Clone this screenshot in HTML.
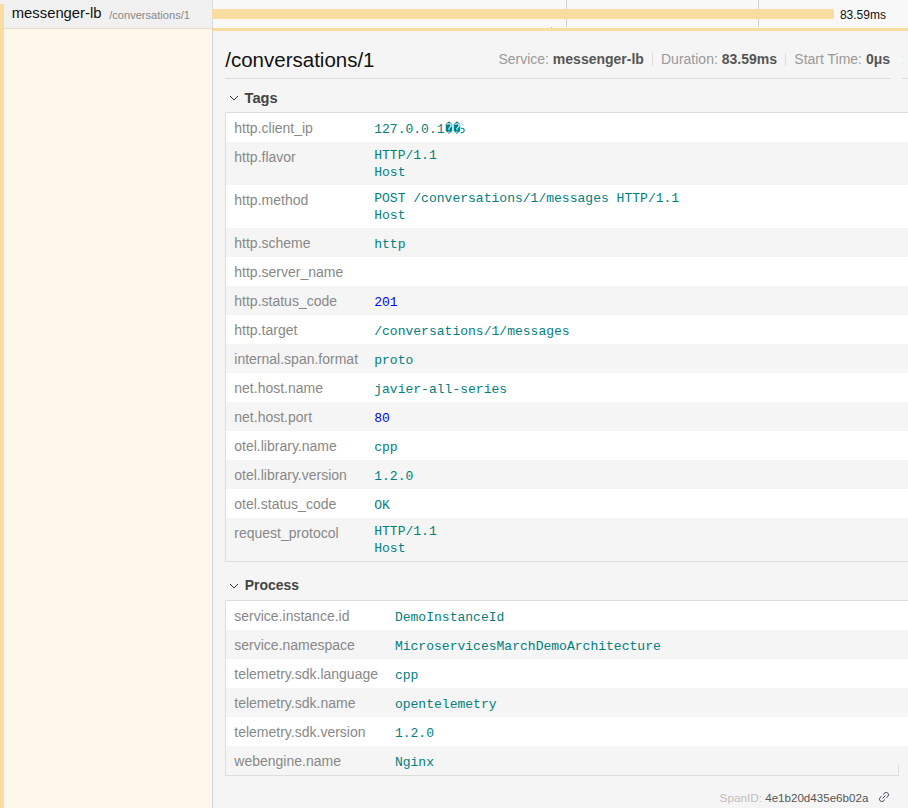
<!DOCTYPE html>
<html><head><meta charset="utf-8">
<style>
html,body{margin:0;padding:0;width:908px;height:808px;overflow:hidden;background:#f5f5f5;}
body{position:relative;font-family:"Liberation Sans",sans-serif;}
.a{position:absolute;white-space:pre;line-height:1;}
.m{font-family:"Liberation Mono",monospace;}
.b{position:absolute;}
b{font-weight:bold;}
</style></head><body>
<div class="b" style="left:0px;top:0px;width:212px;height:28px;background:#f0f0f0;"></div>
<div class="b" style="left:0px;top:4px;width:4px;height:804px;background:#f8dca1;"></div>
<div class="b" style="left:4px;top:28px;width:208px;height:1px;background:#e6dccb;"></div>
<div class="b" style="left:4px;top:29px;width:208px;height:779px;background:#fef8ec;"></div>
<div class="b" style="left:212px;top:0px;width:1px;height:28px;background:#e6e6e6;"></div>
<div class="b" style="left:212px;top:1px;width:1px;height:1px;background:#d0d0d0;"></div>
<div class="b" style="left:212px;top:3px;width:1px;height:1px;background:#d0d0d0;"></div>
<div class="b" style="left:212px;top:5px;width:1px;height:1px;background:#d0d0d0;"></div>
<div class="b" style="left:212px;top:7px;width:1px;height:1px;background:#d0d0d0;"></div>
<div class="b" style="left:212px;top:9px;width:1px;height:1px;background:#d0d0d0;"></div>
<div class="b" style="left:212px;top:11px;width:1px;height:1px;background:#d0d0d0;"></div>
<div class="b" style="left:212px;top:13px;width:1px;height:1px;background:#d0d0d0;"></div>
<div class="b" style="left:212px;top:15px;width:1px;height:1px;background:#d0d0d0;"></div>
<div class="b" style="left:212px;top:17px;width:1px;height:1px;background:#d0d0d0;"></div>
<div class="b" style="left:212px;top:19px;width:1px;height:1px;background:#d0d0d0;"></div>
<div class="b" style="left:212px;top:21px;width:1px;height:1px;background:#d0d0d0;"></div>
<div class="b" style="left:212px;top:23px;width:1px;height:1px;background:#d0d0d0;"></div>
<div class="b" style="left:212px;top:25px;width:1px;height:1px;background:#d0d0d0;"></div>
<div class="b" style="left:212px;top:27px;width:1px;height:1px;background:#d0d0d0;"></div>
<div class="b" style="left:212px;top:28px;width:1px;height:780px;background:#d3d3d3;"></div>
<div class="b" style="left:213px;top:0px;width:695px;height:28px;background:#f8f8f8;"></div>
<div class="b" style="left:566px;top:0px;width:1px;height:27px;background:#d0d0d0;"></div>
<div class="b" style="left:758px;top:0px;width:1px;height:27px;background:#d0d0d0;"></div>
<div class="b" style="left:551px;top:27px;width:1px;height:1px;background:#b8b8b8;"></div>
<div class="b" style="left:902px;top:56px;width:1px;height:1px;background:#cfe3f3;"></div>
<div class="b" style="left:902px;top:63px;width:1px;height:1px;background:#cfe3f3;"></div>
<div class="b" style="left:212px;top:9px;width:622px;height:10px;background:#f8dca1;border-radius:2px"></div>
<div class="b" style="left:212px;top:28px;width:696px;height:3px;background:#f8dca1;"></div>
<span class="a " style="left:11.8px;top:6.37px;font-size:14.8px;color:#111;">messenger-lb</span>
<span class="a " style="left:109.2px;top:9.90px;font-size:11.1px;color:#888;">/conversations/1</span>
<span class="a " style="left:839.9px;top:9.04px;font-size:12px;color:#111;">83.59ms</span>
<span class="a " style="left:225.25px;top:49.85px;font-size:20.5px;color:#111;">/conversations/1</span>
<span class="a " style="left:498.4px;top:52.15px;font-size:14px;color:#999;">Service: <b style="color:#555">messenger-lb</b></span>
<div class="b" style="left:652px;top:53px;width:1px;height:13px;background:#ddd;"></div>
<span class="a " style="left:661px;top:52.15px;font-size:14px;color:#999;">Duration: <b style="color:#555">83.59ms</b></span>
<div class="b" style="left:785px;top:53px;width:1px;height:13px;background:#ddd;"></div>
<span class="a " style="left:794.3px;top:52.15px;font-size:14px;color:#999;">Start Time: <b style="color:#555">0μs</b></span>
<div class="b" style="left:225px;top:78px;width:666px;height:1px;background:#ddd;"></div>
<div class="b" style="left:902px;top:78px;width:6px;height:1px;background:#ddd;"></div>
<svg class="b" style="left:229px;top:95px" width="11" height="7" viewBox="0 0 11 7"><path d="M1 1 L5 5 L9 1" fill="none" stroke="#343849" stroke-width="1"/></svg>
<span class="a " style="left:244.6px;top:90.94px;font-size:14.6px;color:#444;font-weight:bold">Tags</span>
<div class="b" style="left:225px;top:112px;width:683px;height:1px;background:#ddd;"></div>
<div class="b" style="left:226px;top:113px;width:682px;height:29px;background:#ffffff;"></div>
<span class="a k" style="left:234.3px;top:120.95px;font-size:14px;color:#888;">http.client_ip</span>
<span class="a m" style="left:374.2px;top:123.20px;font-size:13.04px;color:#008080;">127.0.0.1</span>
<span class="a m" style="left:444.7px;top:123.24px;font-size:13px;color:#008080;transform:scaleX(0.93);transform-origin:0 0">�</span>
<span class="a m" style="left:452.5px;top:123.24px;font-size:13px;color:#008080;transform:scaleX(0.93);transform-origin:0 0">�</span>
<svg class="b" style="left:460.2px;top:122px" width="8" height="13" viewBox="0 0 8 13"><path d="M1.5 1.5 L3.5 3" stroke="#9cc8d8" stroke-width="1" fill="none"/><path d="M1 6.3 Q4.2 5.8 4.2 8.3 Q4.2 10.8 0.8 10.6" stroke="#008080" stroke-width="1.1" fill="none"/></svg>
<div class="b" style="left:226px;top:142px;width:682px;height:43px;background:#f5f5f5;"></div>
<span class="a k" style="left:234.3px;top:149.95px;font-size:14px;color:#888;">http.flavor</span>
<span class="a m" style="left:374.2px;top:148.90px;font-size:13.04px;color:#008080;">HTTP/1.1</span>
<span class="a m" style="left:374.2px;top:165.90px;font-size:13.04px;color:#008080;">Host</span>
<div class="b" style="left:226px;top:185px;width:682px;height:43px;background:#ffffff;"></div>
<span class="a k" style="left:234.3px;top:192.95px;font-size:14px;color:#888;">http.method</span>
<span class="a m" style="left:374.2px;top:191.90px;font-size:13.04px;color:#008080;">POST /conversations/1/messages HTTP/1.1</span>
<span class="a m" style="left:374.2px;top:208.90px;font-size:13.04px;color:#008080;">Host</span>
<div class="b" style="left:226px;top:228px;width:682px;height:29px;background:#f5f5f5;"></div>
<span class="a k" style="left:234.3px;top:235.95px;font-size:14px;color:#888;">http.scheme</span>
<span class="a m" style="left:374.2px;top:238.20px;font-size:13.04px;color:#008080;">http</span>
<div class="b" style="left:226px;top:257px;width:682px;height:29px;background:#ffffff;"></div>
<span class="a k" style="left:234.3px;top:264.95px;font-size:14px;color:#888;">http.server_name</span>
<span class="a m" style="left:374.2px;top:267.20px;font-size:13.04px;color:#008080;"></span>
<div class="b" style="left:226px;top:286px;width:682px;height:29px;background:#f5f5f5;"></div>
<span class="a k" style="left:234.3px;top:293.95px;font-size:14px;color:#888;">http.status_code</span>
<span class="a m" style="left:374.2px;top:296.20px;font-size:13.04px;color:#0000ff;">201</span>
<div class="b" style="left:226px;top:315px;width:682px;height:29px;background:#ffffff;"></div>
<span class="a k" style="left:234.3px;top:322.95px;font-size:14px;color:#888;">http.target</span>
<span class="a m" style="left:374.2px;top:325.20px;font-size:13.04px;color:#008080;">/conversations/1/messages</span>
<div class="b" style="left:226px;top:344px;width:682px;height:29px;background:#f5f5f5;"></div>
<span class="a k" style="left:234.3px;top:351.95px;font-size:14px;color:#888;">internal.span.format</span>
<span class="a m" style="left:374.2px;top:354.20px;font-size:13.04px;color:#008080;">proto</span>
<div class="b" style="left:226px;top:373px;width:682px;height:29px;background:#ffffff;"></div>
<span class="a k" style="left:234.3px;top:380.95px;font-size:14px;color:#888;">net.host.name</span>
<span class="a m" style="left:374.2px;top:383.20px;font-size:13.04px;color:#008080;">javier-all-series</span>
<div class="b" style="left:226px;top:402px;width:682px;height:29px;background:#f5f5f5;"></div>
<span class="a k" style="left:234.3px;top:409.95px;font-size:14px;color:#888;">net.host.port</span>
<span class="a m" style="left:374.2px;top:412.20px;font-size:13.04px;color:#0000ff;">80</span>
<div class="b" style="left:226px;top:431px;width:682px;height:29px;background:#ffffff;"></div>
<span class="a k" style="left:234.3px;top:438.95px;font-size:14px;color:#888;">otel.library.name</span>
<span class="a m" style="left:374.2px;top:441.20px;font-size:13.04px;color:#008080;">cpp</span>
<div class="b" style="left:226px;top:460px;width:682px;height:29px;background:#f5f5f5;"></div>
<span class="a k" style="left:234.3px;top:467.95px;font-size:14px;color:#888;">otel.library.version</span>
<span class="a m" style="left:374.2px;top:470.20px;font-size:13.04px;color:#008080;">1.2.0</span>
<div class="b" style="left:226px;top:489px;width:682px;height:29px;background:#ffffff;"></div>
<span class="a k" style="left:234.3px;top:496.95px;font-size:14px;color:#888;">otel.status_code</span>
<span class="a m" style="left:374.2px;top:499.20px;font-size:13.04px;color:#008080;">OK</span>
<div class="b" style="left:226px;top:518px;width:682px;height:43px;background:#f5f5f5;"></div>
<span class="a k" style="left:234.3px;top:525.95px;font-size:14px;color:#888;">request_protocol</span>
<span class="a m" style="left:374.2px;top:524.90px;font-size:13.04px;color:#008080;">HTTP/1.1</span>
<span class="a m" style="left:374.2px;top:541.90px;font-size:13.04px;color:#008080;">Host</span>
<div class="b" style="left:225px;top:112px;width:1px;height:449px;background:#ddd;"></div>
<div class="b" style="left:225px;top:561px;width:683px;height:1px;background:#ddd;"></div>
<svg class="b" style="left:229px;top:583px" width="11" height="7" viewBox="0 0 11 7"><path d="M1 1 L5 5 L9 1" fill="none" stroke="#343849" stroke-width="1"/></svg>
<span class="a " style="left:244.8px;top:579.49px;font-size:13.95px;color:#444;font-weight:bold">Process</span>
<div class="b" style="left:225px;top:600px;width:683px;height:1px;background:#ddd;"></div>
<div class="b" style="left:226px;top:601px;width:682px;height:29px;background:#ffffff;"></div>
<span class="a k" style="left:234.3px;top:608.95px;font-size:14px;color:#888;">service.instance.id</span>
<span class="a m" style="left:394.9px;top:611.20px;font-size:13.04px;color:#008080;">DemoInstanceId</span>
<div class="b" style="left:226px;top:630px;width:682px;height:29px;background:#f5f5f5;"></div>
<span class="a k" style="left:234.3px;top:637.95px;font-size:14px;color:#888;">service.namespace</span>
<span class="a m" style="left:394.9px;top:640.20px;font-size:13.04px;color:#008080;">MicroservicesMarchDemoArchitecture</span>
<div class="b" style="left:226px;top:659px;width:682px;height:29px;background:#ffffff;"></div>
<span class="a k" style="left:234.3px;top:666.95px;font-size:14px;color:#888;">telemetry.sdk.language</span>
<span class="a m" style="left:394.9px;top:669.20px;font-size:13.04px;color:#008080;">cpp</span>
<div class="b" style="left:226px;top:688px;width:682px;height:29px;background:#f5f5f5;"></div>
<span class="a k" style="left:234.3px;top:695.95px;font-size:14px;color:#888;">telemetry.sdk.name</span>
<span class="a m" style="left:394.9px;top:698.20px;font-size:13.04px;color:#008080;">opentelemetry</span>
<div class="b" style="left:226px;top:717px;width:682px;height:29px;background:#ffffff;"></div>
<span class="a k" style="left:234.3px;top:724.95px;font-size:14px;color:#888;">telemetry.sdk.version</span>
<span class="a m" style="left:394.9px;top:727.20px;font-size:13.04px;color:#008080;">1.2.0</span>
<div class="b" style="left:226px;top:746px;width:682px;height:29px;background:#f5f5f5;"></div>
<span class="a k" style="left:234.3px;top:753.95px;font-size:14px;color:#888;">webengine.name</span>
<span class="a m" style="left:394.9px;top:756.20px;font-size:13.04px;color:#008080;">Nginx</span>
<div class="b" style="left:225px;top:600px;width:1px;height:175px;background:#ddd;"></div>
<div class="b" style="left:225px;top:775px;width:674px;height:1px;background:#ddd;"></div>
<div class="b" style="left:898px;top:765px;width:1px;height:10px;background:#ddd;"></div>
<span class="a " style="left:719.6px;top:792.35px;font-size:11.75px;color:#bdbdbd;">SpanID:</span>
<span class="a " style="left:765.2px;top:792.48px;font-size:11.6px;color:#555;">4e1b20d435e6b02a</span>
<svg class="b" style="left:876px;top:789px" width="16" height="16" viewBox="0 0 16 16"><g fill="none" stroke="#3c4052" stroke-width="1" stroke-linecap="round"><path d="M7.3 5.3 L8.87 3.87 A2.35 2.35 0 0 1 12.13 7.13 L10.6 8.6"/><path d="M8.7 10.7 L7.13 12.13 A2.35 2.35 0 0 1 3.87 8.87 L5.4 7.4"/><path d="M6.7 9.3 L9.3 6.7" stroke-width="0.9"/></g></svg>
</body></html>
